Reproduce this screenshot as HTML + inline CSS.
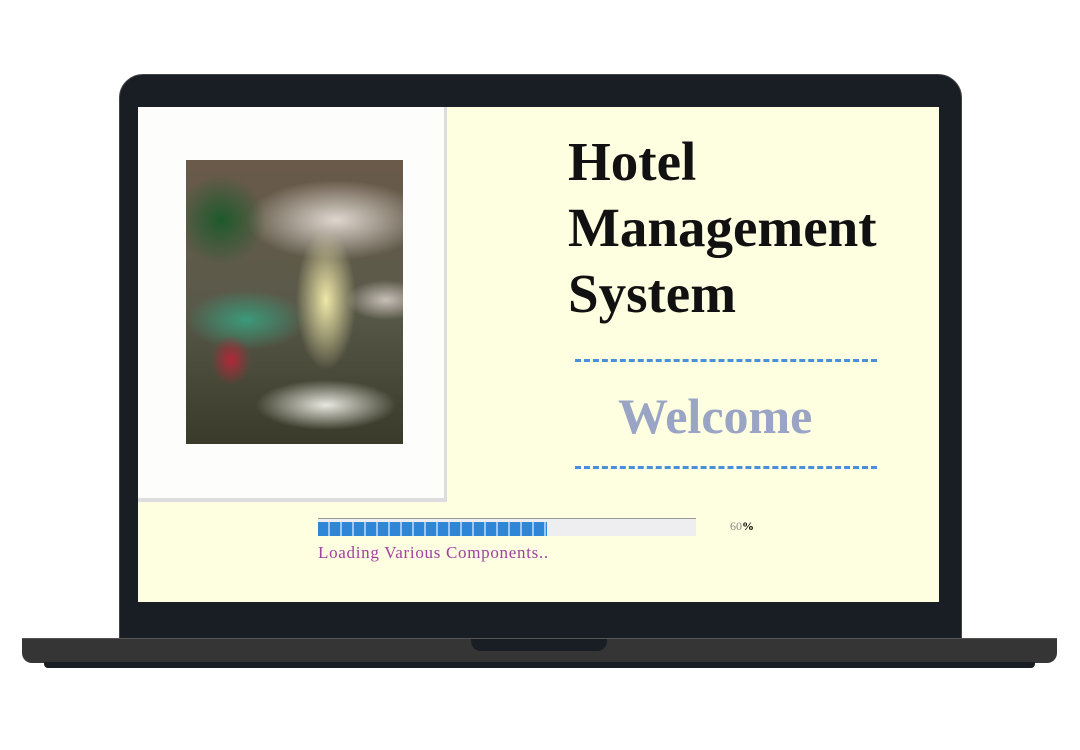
<!DOCTYPE html>
<html><head><meta charset="utf-8"><style>
body{margin:0;width:1080px;height:750px;background:#fff;position:relative;overflow:hidden;font-family:"Liberation Serif",serif}
.bezel{position:absolute;left:119px;top:74px;width:841px;height:570px;background:#181e24;border-radius:24px 24px 0 0;border:1px solid #444}
.screen{position:absolute;left:138px;top:107px;width:801px;height:495px;background:#fefee0;overflow:hidden}
.panel{position:absolute;left:0;top:0;width:306px;height:391px;background:#fdfdfb;border-right:3px solid #ddd;border-bottom:4px solid #ddd}
.photo{position:absolute;left:48px;top:53px;width:217px;height:284px;background:
radial-gradient(ellipse 30px 70px at 140px 140px,#efe7a8,transparent),
radial-gradient(ellipse 20px 25px at 45px 200px,#b02838,transparent),
radial-gradient(ellipse 70px 25px at 140px 245px,#e8e8e0,transparent),
radial-gradient(ellipse 45px 45px at 35px 60px,#1e5a2a,transparent),
radial-gradient(ellipse 90px 40px at 150px 60px,#e0d8d0,transparent),
radial-gradient(ellipse 60px 30px at 60px 160px,#3b9a7a,transparent),
radial-gradient(ellipse 40px 20px at 200px 140px,#c8c0b8,transparent),
linear-gradient(#6a5a4a,#5a5a4a 50%,#3a3a2a);}
.t{position:absolute;left:430px;top:22px;font-weight:bold;font-size:55px;line-height:66px;color:#111}
.dash{position:absolute;left:437px;width:302px;border-top:3px dashed #4a90d9}
.w{position:absolute;left:480px;top:280px;font-weight:bold;font-size:50px;color:#9aa4c4}
.bar{position:absolute;left:180px;top:411px;width:378px;height:17px;background:#eeeef0;border-top:1px solid #999}
.fill{position:absolute;left:0;top:3px;width:229px;height:14px;background:repeating-linear-gradient(90deg,#2f86d6 0 10px,#9cc8ee 10px 12px)}
.ld{position:absolute;left:180px;top:436px;font-size:17px;letter-spacing:0.7px;color:#a040a0}
.pc{position:absolute;left:592px;top:412px;font-size:12px;color:#888}
.base{position:absolute;left:22px;top:638px;width:1035px;height:24px;background:#353535;border-top:1px solid #555;border-radius:0 0 10px 10px}
.strip{position:absolute;left:44px;top:662px;width:991px;height:6px;background:#181e24;border-radius:0 0 4px 4px}
.notch{position:absolute;left:471px;top:639px;width:136px;height:12px;background:#181e24;border-radius:0 0 10px 10px}
</style></head><body>
<div class="bezel"></div>
<div class="screen">
<div class="panel"><div class="photo"></div></div>
<div class="t">Hotel<br>Management<br>System</div>
<div class="dash" style="top:252px"></div>
<div class="w">Welcome</div>
<div class="dash" style="top:359px"></div>
<div class="bar"><div class="fill"></div></div>
<div class="pc">60<b style="color:#000">%</b></div>
<div class="ld">Loading Various Components..</div>
</div>
<div class="base"></div>
<div class="strip"></div>
<div class="notch"></div>
</body></html>
